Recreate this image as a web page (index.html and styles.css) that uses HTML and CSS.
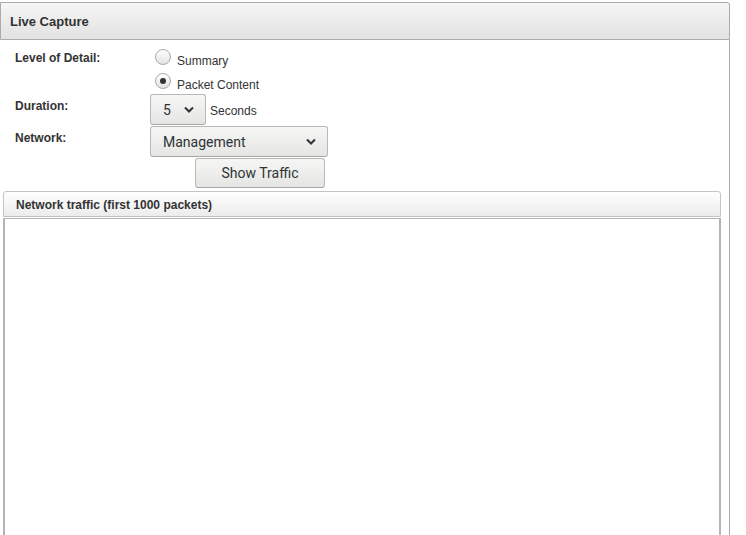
FILE: index.html
```html
<!DOCTYPE html>
<html>
<head>
<meta charset="utf-8">
<link rel="stylesheet" href="styles.css">
</head>
<body>
<div class="panel">
  <div class="panel-head">Live Capture</div>
  <div class="panel-body">
    <div class="form">
      <div class="label lbl-detail">Level of Detail:</div>
      <div class="radios">
        <div class="opt"><span class="radio"></span><span class="opt-text">Summary</span></div>
        <div class="opt opt-last"><span class="radio checked"></span><span class="opt-text">Packet Content</span></div>
      </div>
      <div class="label lbl-field">Duration:</div>
      <div class="ctrl-row">
        <div class="select sel-dur"><span>5</span><svg class="chev" width="10" height="7" viewBox="0 0 10 7"><polyline points="1,1.5 5,5.5 9,1.5" fill="none" stroke="#2e3436" stroke-width="2"/></svg></div>
        <span class="unit">Seconds</span>
      </div>
      <div class="label lbl-field">Network:</div>
      <div class="ctrl-row">
        <div class="select sel-net"><span>Management</span><svg class="chev" width="10" height="7" viewBox="0 0 10 7"><polyline points="1,1.5 5,5.5 9,1.5" fill="none" stroke="#2e3436" stroke-width="2"/></svg></div>
      </div>
      <div></div>
      <div class="ctrl-row"><button class="btn">Show Traffic</button></div>
    </div>
    <div class="sub">
      <div class="sub-head">Network traffic (first 1000 packets)</div>
      <div class="sub-body"></div>
    </div>
  </div>
</div>
</body>
</html>
```
FILE: styles.css
```css
html, body {
  margin: 0;
  padding: 0;
  background: #ffffff;
  font-family: "Liberation Sans", Arial, sans-serif;
  color: #333333;
}
body {
  padding-top: 2px;
  overflow: hidden;
  height: 533px;
}
.panel {
  width: 730px;
  box-sizing: border-box;
}
.panel-head {
  height: 38px;
  box-sizing: border-box;
  border: 1px solid #ababab;
  border-radius: 0 3px 0 0;
  background: linear-gradient(#f6f6f6, #e2e2e2);
  font-weight: bold;
  font-size: 13px;
  line-height: 36px;
  padding: 1px 0 0 9px;
  color: #333;
}
.panel-body {
  border-right: 1px solid #ababab;
  padding: 0 8px 0 3px;
  height: 600px;
}
.form {
  display: grid;
  grid-template-columns: 135px auto;
  padding: 9px 0 0 12px;
  font-size: 12px;
  line-height: 14px;
}
.label {
  font-weight: bold;
  color: #333;
}
.lbl-detail { padding-top: 2px; }
.lbl-field { padding-top: 5px; }
.radios {
  display: flex;
  flex-direction: column;
}
.opt {
  display: flex;
  align-items: flex-start;
  height: 24px;
}
.opt-last { height: 21px; }
.radio {
  width: 16px;
  height: 16px;
  box-sizing: border-box;
  border: 1px solid #a9a9a6;
  border-radius: 50%;
  background: linear-gradient(#ffffff, #e2e2e0);
  margin: 0 6px 0 5px;
  display: flex;
  align-items: center;
  justify-content: center;
}
.radio.checked::after {
  content: "";
  width: 6px;
  height: 6px;
  border-radius: 50%;
  background: #2e3436;
}
.opt-text {
  padding-top: 5px;
  color: #333;
}
.ctrl-row {
  display: flex;
  align-items: center;
  height: 32px;
}
.select, .btn {
  box-sizing: border-box;
  border: 1px solid #b8b8b5;
  border-bottom-color: #a6a6a3;
  border-radius: 3px;
  background: linear-gradient(#f6f6f5, #e5e5e3);
  font-family: Roboto, "Noto Sans", sans-serif;
  font-size: 14px;
  line-height: 16px;
  color: #2e3436;
}
.select {
  height: 31px;
  margin-bottom: 1px;
  display: flex;
  align-items: center;
  justify-content: space-between;
  padding: 0 11px 0 12px;
}
.select span { display: block; }
.chev { display: block; }
.sel-dur { width: 56px; }
.sel-net { width: 178px; }
.unit {
  margin-left: 4px;
  padding-top: 1px;
  color: #333;
}
.ctrl-row:last-child { height: 30px; align-items: flex-start; }
.btn {
  height: 30px;
  width: 130px;
  margin-left: 45px;
  padding: 0;
  text-align: center;
}
.sub {
  margin-top: 3px;
  width: 718px;
}
.sub-head {
  height: 26px;
  box-sizing: border-box;
  border: 1px solid #c4c4c4;
  border-radius: 3px 3px 0 0;
  background: linear-gradient(#ffffff, #ececec);
  font-weight: bold;
  font-size: 12px;
  line-height: 24px;
  padding: 1px 0 0 12px;
  color: #333;
}
.sub-body {
  margin-top: 1px;
  height: 400px;
  border: 1px solid #b4b4b4;
  border-left-width: 2px;
  border-right-width: 2px;
  border-bottom: none;
}
```
